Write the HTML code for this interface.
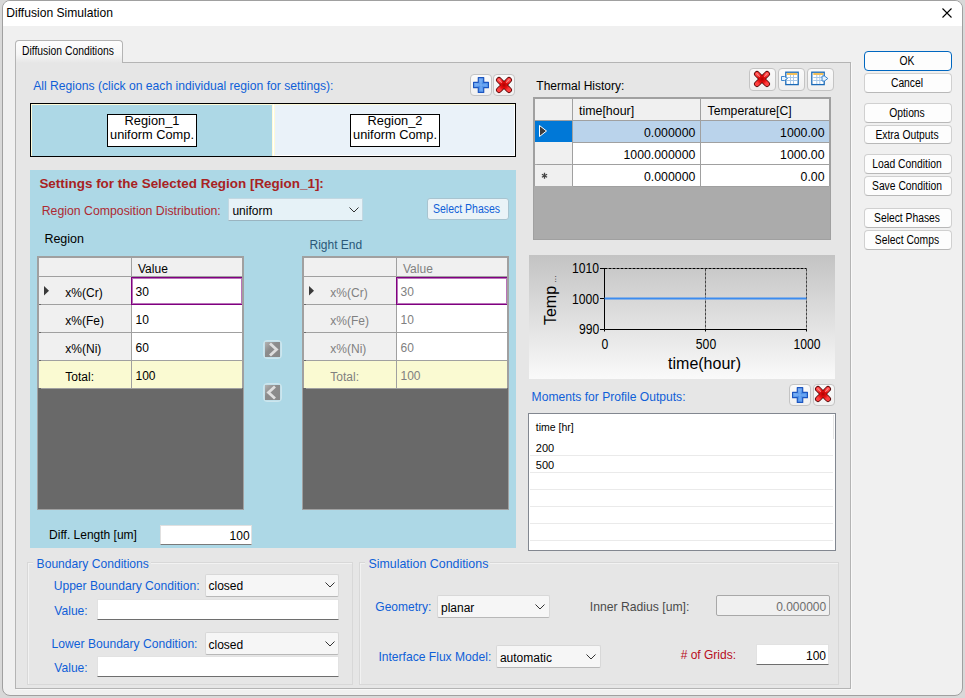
<!DOCTYPE html><html><head><meta charset="utf-8"><style>html,body{margin:0;padding:0;}body{width:965px;height:698px;position:relative;overflow:hidden;background:#d8d8d8;font-family:"Liberation Sans", sans-serif;}</style></head><body>
<div style="position:absolute;left:2px;top:0px;width:961px;height:696px;box-sizing:border-box;background:#f0f0f0;border:1px solid #a0a0a0;border-radius:8px;"></div>
<div style="position:absolute;left:3px;top:1px;width:959px;height:25px;box-sizing:border-box;background:#fff;border-radius:7px 7px 0 0;"></div>
<div style="position:absolute;left:6.3px;top:6.76px;font-size:12.1px;line-height:12.1px;color:#000;white-space:nowrap;">Diffusion Simulation</div>
<svg style="position:absolute;left:941px;top:7px" width="12" height="12"><path d="M1.5 1.5L10.5 10.5M10.5 1.5L1.5 10.5" stroke="#000" stroke-width="1.1"/></svg>
<div style="position:absolute;left:15px;top:62px;width:836px;height:627px;box-sizing:border-box;background:#e6e6e6;border:1px solid #b4b4b4;border-right-color:#b4b4b4;box-shadow:1px 1px 0 #f8f8f8;"></div>
<div style="position:absolute;left:15px;top:40px;width:108px;height:23px;box-sizing:border-box;background:linear-gradient(#fdfdfd 0%,#f6f6f6 60%,#e6e6e6 100%);border:1px solid #b4b4b4;border-bottom:none;border-radius:4px 4px 0 0;"></div>
<div style="position:absolute;left:22.4px;top:44.84px;font-size:12px;line-height:12px;color:#000;white-space:nowrap;transform:scaleX(0.862);transform-origin:left;">Diffusion Conditions</div>
<div style="position:absolute;left:33.2px;top:79.72px;font-size:12.15px;line-height:12.15px;color:#0f5fd8;white-space:nowrap;">All Regions (click on each individual region for settings):</div>
<div style="position:absolute;left:470px;top:74px;width:22px;height:22px;box-sizing:border-box;background:linear-gradient(#fafafa,#f0f0f0);border:1px solid #c4c4c4;border-radius:4px;"><svg width="22" height="22" style="position:absolute;left:-1px;top:-1px"><defs><linearGradient id="gp470" x1="0" y1="0" x2="1" y2="1"><stop offset="0" stop-color="#a8d0ff"/><stop offset="0.5" stop-color="#4a8ee8"/><stop offset="1" stop-color="#7ab4fa"/></linearGradient></defs><g transform="translate(3,3)"><path d="M5.3 0.6h5.4v4.7h4.7v5.4h-4.7v4.7h-5.4v-4.7h-4.7v-5.4h4.7z" fill="url(#gp470)" stroke="#1c55c0" stroke-width="1.2" stroke-linejoin="round"/><path d="M8 2.5v11M2.5 8h11" stroke="#9cc8ff" stroke-width="1" opacity="0.6"/></g></svg></div>
<div style="position:absolute;left:493px;top:74px;width:22px;height:22px;box-sizing:border-box;background:linear-gradient(#fafafa,#f0f0f0);border:1px solid #c4c4c4;border-radius:4px;"><svg width="22" height="22" style="position:absolute;left:-1px;top:-1px"><defs><radialGradient id="gx493" cx="0.5" cy="0.5" r="0.6"><stop offset="0" stop-color="#b00000"/><stop offset="0.6" stop-color="#e81010"/><stop offset="1" stop-color="#ff4040"/></radialGradient></defs><g transform="translate(3,3)"><path d="M3 3L13 13M13 3L3 13" stroke="#5a0a0a" stroke-width="6" stroke-linecap="round"/><path d="M3 3L13 13M13 3L3 13" stroke="url(#gx493)" stroke-width="4.3" stroke-linecap="round"/><path d="M2.8 2.6L5.5 5.3M13.2 2.6L10.5 5.3" stroke="#ffb0b0" stroke-width="1.2" stroke-linecap="round" opacity="0.7"/></g></svg></div>
<div style="position:absolute;left:30px;top:103px;width:486px;height:54px;box-sizing:border-box;background:#eaf2f9;border:1px solid #000;"></div>
<div style="position:absolute;left:31px;top:104px;width:242px;height:52px;box-sizing:border-box;background:#add8e6;border-left:1px solid #fffbd8;border-top:1px solid #fffbd8;border-right:1px solid #fffbd8;"></div>
<div style="position:absolute;left:273px;top:104px;width:1px;height:52px;box-sizing:border-box;background:#fff;"></div>
<div style="position:absolute;left:274px;top:104px;width:241px;height:52px;box-sizing:border-box;background:#eaf2f9;border-left:1px solid #fffbd8;border-top:1px solid #fffbd8;border-right:1px solid #fff;border-bottom:1px solid #fff;"></div>
<div style="position:absolute;left:107px;top:114px;width:90px;height:33px;box-sizing:border-box;background:#fff;border:1px solid #000;"></div>
<div style="position:absolute;left:-48px;width:400px;text-align:center;top:115.16px;font-size:12.8px;line-height:12.8px;color:#000;white-space:nowrap;">Region_1</div>
<div style="position:absolute;left:-48px;width:400px;text-align:center;top:129.16px;font-size:12.8px;line-height:12.8px;color:#000;white-space:nowrap;">uniform Comp.</div>
<div style="position:absolute;left:350px;top:114px;width:90px;height:33px;box-sizing:border-box;background:#fff;border:1px solid #000;"></div>
<div style="position:absolute;left:195px;width:400px;text-align:center;top:115.16px;font-size:12.8px;line-height:12.8px;color:#000;white-space:nowrap;">Region_2</div>
<div style="position:absolute;left:195px;width:400px;text-align:center;top:129.16px;font-size:12.8px;line-height:12.8px;color:#000;white-space:nowrap;">uniform Comp.</div>
<div style="position:absolute;left:30px;top:170px;width:486px;height:378px;box-sizing:border-box;background:#add8e6;"></div>
<div style="position:absolute;left:39.4px;top:177.11px;font-size:13.45px;line-height:13.45px;color:#a82222;white-space:nowrap;font-weight:bold;">Settings for the Selected Region [Region_1]:</div>
<div style="position:absolute;left:41.7px;top:204.59px;font-size:12.3px;line-height:12.3px;color:#ad2a32;white-space:nowrap;">Region Composition Distribution:</div>
<div style="position:absolute;left:228px;top:198px;width:135px;height:23px;box-sizing:border-box;background:#e6f2f7;border:1px solid #c2d8e2;border-bottom-color:#9ab4c0;"></div>
<div style="position:absolute;left:232.4px;top:204.84px;font-size:12px;line-height:12px;color:#000;white-space:nowrap;">uniform</div>
<svg style="position:absolute;left:349px;top:207px" width="10" height="6"><path d="M0.5 0.5L5 5L9.5 0.5" stroke="#333" stroke-width="1" fill="none"/></svg>
<div style="position:absolute;left:427px;top:198px;width:82px;height:22px;box-sizing:border-box;background:#eaf3f7;border:1px solid #a8c4d0;border-radius:3px;"></div>
<div style="position:absolute;left:433.4px;top:202.84px;font-size:12px;line-height:12px;color:#0f5fd8;white-space:nowrap;transform:scaleX(0.875);transform-origin:left;">Select Phases</div>
<div style="position:absolute;left:44.4px;top:232.62px;font-size:12.5px;line-height:12.5px;color:#000;white-space:nowrap;">Region</div>
<div style="position:absolute;left:309.5px;top:238.84px;font-size:12px;line-height:12px;color:#2a5878;white-space:nowrap;">Right End</div>
<div style="position:absolute;left:263px;top:340px;width:19px;height:20px;box-sizing:border-box;"><svg width="19" height="19" style="position:absolute;left:0;top:0"><defs><linearGradient id="ga340" x1="0" y1="0" x2="1" y2="1"><stop offset="0" stop-color="#b4b4b4"/><stop offset="0.4" stop-color="#8c8c8c"/><stop offset="1" stop-color="#888"/></linearGradient></defs><rect x="0.5" y="0.5" width="18" height="18" rx="3.5" fill="#c2e0ea" stroke="#cde6ee"/><rect x="2" y="2" width="15" height="15" fill="url(#ga340)"/><path d="M7 3.5L13.5 9.5L7 15.5" stroke="#dedede" stroke-width="2.8" fill="none"/></svg></div>
<div style="position:absolute;left:263px;top:383px;width:19px;height:19px;box-sizing:border-box;"><svg width="19" height="19" style="position:absolute;left:0;top:0"><defs><linearGradient id="ga383" x1="0" y1="0" x2="1" y2="1"><stop offset="0" stop-color="#b4b4b4"/><stop offset="0.4" stop-color="#8c8c8c"/><stop offset="1" stop-color="#888"/></linearGradient></defs><rect x="0.5" y="0.5" width="18" height="18" rx="3.5" fill="#c2e0ea" stroke="#cde6ee"/><rect x="2" y="2" width="15" height="15" fill="url(#ga383)"/><path d="M12 3.5L5.5 9.5L12 15.5" stroke="#dedede" stroke-width="2.8" fill="none"/></svg></div>
<div style="position:absolute;left:160px;top:525px;width:92px;height:20px;box-sizing:border-box;background:#fff;border:1px solid #e0e0e0;border-bottom:1px solid #7a7a7a;"></div>
<div style="position:absolute;left:49.1px;top:528.84px;font-size:12px;line-height:12px;color:#000;white-space:nowrap;">Diff. Length [um]</div>
<div style="position:absolute;right:715.4px;top:529.84px;font-size:12px;line-height:12px;color:#000;white-space:nowrap;">100</div>
<div style="position:absolute;left:37px;top:256px;width:207px;height:254px;box-sizing:border-box;background:#696969;border:1px solid #a0a0a0;"></div>
<div style="position:absolute;left:39px;top:258px;width:203px;height:18px;box-sizing:border-box;background:#f0f0f0;"></div>
<div style="position:absolute;left:39px;top:276px;width:203px;height:1px;box-sizing:border-box;background:#a0a0a0;"></div>
<div style="position:absolute;left:131px;top:258px;width:1px;height:130px;box-sizing:border-box;background:#a0a0a0;"></div>
<div style="position:absolute;left:138px;top:263.24px;font-size:12px;line-height:12px;color:#000;white-space:nowrap;">Value</div>
<div style="position:absolute;left:39px;top:277px;width:92px;height:27px;box-sizing:border-box;background:#f0f0f0;"></div>
<div style="position:absolute;left:132px;top:277px;width:110px;height:27px;box-sizing:border-box;background:#fff;"></div>
<div style="position:absolute;left:41px;top:304px;width:90px;height:1px;box-sizing:border-box;background:#a0a0a0;"></div>
<div style="position:absolute;left:39px;top:305px;width:92px;height:1px;box-sizing:border-box;background:#fff;"></div>
<div style="position:absolute;left:131px;top:304px;width:111px;height:1px;box-sizing:border-box;background:#a0a0a0;"></div>
<div style="position:absolute;left:65.3px;top:286.84px;font-size:12px;line-height:12px;color:#000;white-space:nowrap;">x%(Cr)</div>
<div style="position:absolute;left:135.5px;top:286.34px;font-size:12px;line-height:12px;color:#000;white-space:nowrap;">30</div>
<div style="position:absolute;left:39px;top:305px;width:92px;height:27px;box-sizing:border-box;background:#f0f0f0;"></div>
<div style="position:absolute;left:132px;top:305px;width:110px;height:27px;box-sizing:border-box;background:#fff;"></div>
<div style="position:absolute;left:41px;top:332px;width:90px;height:1px;box-sizing:border-box;background:#a0a0a0;"></div>
<div style="position:absolute;left:39px;top:333px;width:92px;height:1px;box-sizing:border-box;background:#fff;"></div>
<div style="position:absolute;left:131px;top:332px;width:111px;height:1px;box-sizing:border-box;background:#a0a0a0;"></div>
<div style="position:absolute;left:65.3px;top:314.84px;font-size:12px;line-height:12px;color:#000;white-space:nowrap;">x%(Fe)</div>
<div style="position:absolute;left:135.5px;top:314.34px;font-size:12px;line-height:12px;color:#000;white-space:nowrap;">10</div>
<div style="position:absolute;left:39px;top:333px;width:92px;height:27px;box-sizing:border-box;background:#f0f0f0;"></div>
<div style="position:absolute;left:132px;top:333px;width:110px;height:27px;box-sizing:border-box;background:#fff;"></div>
<div style="position:absolute;left:41px;top:360px;width:90px;height:1px;box-sizing:border-box;background:#a0a0a0;"></div>
<div style="position:absolute;left:39px;top:361px;width:92px;height:1px;box-sizing:border-box;background:#fff;"></div>
<div style="position:absolute;left:131px;top:360px;width:111px;height:1px;box-sizing:border-box;background:#a0a0a0;"></div>
<div style="position:absolute;left:65.3px;top:342.84px;font-size:12px;line-height:12px;color:#000;white-space:nowrap;">x%(Ni)</div>
<div style="position:absolute;left:135.5px;top:342.34px;font-size:12px;line-height:12px;color:#000;white-space:nowrap;">60</div>
<div style="position:absolute;left:39px;top:361px;width:92px;height:27px;box-sizing:border-box;background:#fafad2;"></div>
<div style="position:absolute;left:132px;top:361px;width:110px;height:27px;box-sizing:border-box;background:#fafad2;"></div>
<div style="position:absolute;left:41px;top:388px;width:90px;height:1px;box-sizing:border-box;background:#a0a0a0;"></div>
<div style="position:absolute;left:131px;top:388px;width:111px;height:1px;box-sizing:border-box;background:#a0a0a0;"></div>
<div style="position:absolute;left:65.3px;top:370.84px;font-size:12px;line-height:12px;color:#000;white-space:nowrap;">Total:</div>
<div style="position:absolute;left:135.5px;top:370.34px;font-size:12px;line-height:12px;color:#000;white-space:nowrap;">100</div>
<div style="position:absolute;left:131px;top:277px;width:112px;height:28px;box-sizing:border-box;border:1px solid #800080;box-shadow:inset 0 0 0 1px rgba(128,0,128,0.55);"></div>
<svg style="position:absolute;left:44px;top:286px" width="6" height="10"><path d="M0 0L5 4.7L0 9.4z" fill="#3a3a3a"/></svg>
<div style="position:absolute;left:38px;top:257px;width:205px;height:131px;box-sizing:border-box;border:1px solid #a0a0a0;border-bottom:none;"></div>
<div style="position:absolute;left:302px;top:256px;width:207px;height:254px;box-sizing:border-box;background:#696969;border:1px solid #a0a0a0;"></div>
<div style="position:absolute;left:304px;top:258px;width:203px;height:18px;box-sizing:border-box;background:#f0f0f0;"></div>
<div style="position:absolute;left:304px;top:276px;width:203px;height:1px;box-sizing:border-box;background:#a0a0a0;"></div>
<div style="position:absolute;left:396px;top:258px;width:1px;height:130px;box-sizing:border-box;background:#a0a0a0;"></div>
<div style="position:absolute;left:403px;top:263.24px;font-size:12px;line-height:12px;color:#808080;white-space:nowrap;">Value</div>
<div style="position:absolute;left:304px;top:277px;width:92px;height:27px;box-sizing:border-box;background:#f0f0f0;"></div>
<div style="position:absolute;left:397px;top:277px;width:110px;height:27px;box-sizing:border-box;background:#fff;"></div>
<div style="position:absolute;left:306px;top:304px;width:90px;height:1px;box-sizing:border-box;background:#a0a0a0;"></div>
<div style="position:absolute;left:304px;top:305px;width:92px;height:1px;box-sizing:border-box;background:#fff;"></div>
<div style="position:absolute;left:396px;top:304px;width:111px;height:1px;box-sizing:border-box;background:#a0a0a0;"></div>
<div style="position:absolute;left:330.3px;top:286.84px;font-size:12px;line-height:12px;color:#808080;white-space:nowrap;">x%(Cr)</div>
<div style="position:absolute;left:400.5px;top:286.34px;font-size:12px;line-height:12px;color:#808080;white-space:nowrap;">30</div>
<div style="position:absolute;left:304px;top:305px;width:92px;height:27px;box-sizing:border-box;background:#f0f0f0;"></div>
<div style="position:absolute;left:397px;top:305px;width:110px;height:27px;box-sizing:border-box;background:#fff;"></div>
<div style="position:absolute;left:306px;top:332px;width:90px;height:1px;box-sizing:border-box;background:#a0a0a0;"></div>
<div style="position:absolute;left:304px;top:333px;width:92px;height:1px;box-sizing:border-box;background:#fff;"></div>
<div style="position:absolute;left:396px;top:332px;width:111px;height:1px;box-sizing:border-box;background:#a0a0a0;"></div>
<div style="position:absolute;left:330.3px;top:314.84px;font-size:12px;line-height:12px;color:#808080;white-space:nowrap;">x%(Fe)</div>
<div style="position:absolute;left:400.5px;top:314.34px;font-size:12px;line-height:12px;color:#808080;white-space:nowrap;">10</div>
<div style="position:absolute;left:304px;top:333px;width:92px;height:27px;box-sizing:border-box;background:#f0f0f0;"></div>
<div style="position:absolute;left:397px;top:333px;width:110px;height:27px;box-sizing:border-box;background:#fff;"></div>
<div style="position:absolute;left:306px;top:360px;width:90px;height:1px;box-sizing:border-box;background:#a0a0a0;"></div>
<div style="position:absolute;left:304px;top:361px;width:92px;height:1px;box-sizing:border-box;background:#fff;"></div>
<div style="position:absolute;left:396px;top:360px;width:111px;height:1px;box-sizing:border-box;background:#a0a0a0;"></div>
<div style="position:absolute;left:330.3px;top:342.84px;font-size:12px;line-height:12px;color:#808080;white-space:nowrap;">x%(Ni)</div>
<div style="position:absolute;left:400.5px;top:342.34px;font-size:12px;line-height:12px;color:#808080;white-space:nowrap;">60</div>
<div style="position:absolute;left:304px;top:361px;width:92px;height:27px;box-sizing:border-box;background:#fafad2;"></div>
<div style="position:absolute;left:397px;top:361px;width:110px;height:27px;box-sizing:border-box;background:#fafad2;"></div>
<div style="position:absolute;left:306px;top:388px;width:90px;height:1px;box-sizing:border-box;background:#a0a0a0;"></div>
<div style="position:absolute;left:396px;top:388px;width:111px;height:1px;box-sizing:border-box;background:#a0a0a0;"></div>
<div style="position:absolute;left:330.3px;top:370.84px;font-size:12px;line-height:12px;color:#808080;white-space:nowrap;">Total:</div>
<div style="position:absolute;left:400.5px;top:370.34px;font-size:12px;line-height:12px;color:#808080;white-space:nowrap;">100</div>
<div style="position:absolute;left:396px;top:277px;width:112px;height:28px;box-sizing:border-box;border:1px solid #800080;box-shadow:inset 0 0 0 1px rgba(128,0,128,0.55);"></div>
<svg style="position:absolute;left:309px;top:286px" width="6" height="10"><path d="M0 0L5 4.7L0 9.4z" fill="#3a3a3a"/></svg>
<div style="position:absolute;left:303px;top:257px;width:205px;height:131px;box-sizing:border-box;border:1px solid #a0a0a0;border-bottom:none;"></div>
<div style="position:absolute;left:536.3px;top:80.34px;font-size:12px;line-height:12px;color:#000;white-space:nowrap;">Thermal History:</div>
<div style="position:absolute;left:749px;top:68px;width:27px;height:23px;box-sizing:border-box;background:linear-gradient(#fafafa,#f0f0f0);border:1px solid #c4c4c4;border-radius:4px;"><svg width="26.0" height="22.099999999999994" style="position:absolute;left:-1px;top:-1px"><defs><radialGradient id="gx750" cx="0.5" cy="0.5" r="0.6"><stop offset="0" stop-color="#b00000"/><stop offset="0.6" stop-color="#e81010"/><stop offset="1" stop-color="#ff4040"/></radialGradient></defs><g transform="translate(5,3)"><path d="M3 3L13 13M13 3L3 13" stroke="#5a0a0a" stroke-width="6" stroke-linecap="round"/><path d="M3 3L13 13M13 3L3 13" stroke="url(#gx750)" stroke-width="4.3" stroke-linecap="round"/><path d="M2.8 2.6L5.5 5.3M13.2 2.6L10.5 5.3" stroke="#ffb0b0" stroke-width="1.2" stroke-linecap="round" opacity="0.7"/></g></svg></div>
<div style="position:absolute;left:778px;top:68px;width:27px;height:23px;box-sizing:border-box;background:linear-gradient(#fafafa,#f0f0f0);border:1px solid #c4c4c4;border-radius:4px;"><svg width="26.0" height="22.099999999999994" style="position:absolute;left:-1px;top:-1px"><g transform="translate(0,0)"><rect x="7.8" y="4.2" width="12.4" height="12.4" fill="#fff" stroke="#1a6ab8" stroke-width="1.3"/><rect x="9" y="5.2" width="10" height="1.6" fill="#f0b030"/><path d="M9 9.5h10M9 12.5h10M12.5 7v9M15.5 7v9" stroke="#a8c8e8" stroke-width="1"/><path d="M3.5 8.5h3l3 2-3 2h-3z" fill="#e8f4ff" stroke="#2a7ac8" stroke-width="0.9"/></g></svg></div>
<div style="position:absolute;left:807px;top:68px;width:27px;height:23px;box-sizing:border-box;background:linear-gradient(#fafafa,#f0f0f0);border:1px solid #c4c4c4;border-radius:4px;"><svg width="26.0" height="22.099999999999994" style="position:absolute;left:-1px;top:-1px"><g><rect x="4.8" y="4.2" width="12.4" height="12.4" fill="#fff" stroke="#1a6ab8" stroke-width="1.3"/><rect x="6.3" y="5.2" width="10" height="1.6" fill="#f0b030"/><path d="M6.3 9.5h10M6.3 12.5h10M9.8 7v9M12.8 7v9" stroke="#a8c8e8" stroke-width="1"/><path d="M15 8h2.5l3.3 2.5-3.3 2.5h-2.5z" fill="#e8f4ff" stroke="#2a7ac8" stroke-width="0.9"/></g></svg></div>
<div style="position:absolute;left:533px;top:97px;width:298px;height:143px;box-sizing:border-box;background:#ababab;border:1px solid #a0a0a0;"></div>
<div style="position:absolute;left:534px;top:98px;width:296px;height:88px;box-sizing:border-box;border:1px solid #a0a0a0;border-bottom:none;"></div>
<div style="position:absolute;left:535px;top:99px;width:294px;height:21px;box-sizing:border-box;background:#f0f0f0;"></div>
<div style="position:absolute;left:535px;top:120px;width:294px;height:1px;box-sizing:border-box;background:#a0a0a0;"></div>
<div style="position:absolute;left:572px;top:99px;width:1px;height:87px;box-sizing:border-box;background:#a0a0a0;"></div>
<div style="position:absolute;left:700px;top:99px;width:1px;height:87px;box-sizing:border-box;background:#a0a0a0;"></div>
<div style="position:absolute;left:700px;top:104px;width:1px;height:13px;box-sizing:border-box;background:#a0a0a0;"></div>
<div style="position:absolute;left:579px;top:105.30px;font-size:12.4px;line-height:12.4px;color:#000;white-space:nowrap;">time[hour]</div>
<div style="position:absolute;left:707.6px;top:105.47px;font-size:12.2px;line-height:12.2px;color:#000;white-space:nowrap;">Temperature[C]</div>
<div style="position:absolute;left:535px;top:121px;width:37px;height:21px;box-sizing:border-box;background:#0078d7;"></div>
<div style="position:absolute;left:573px;top:121px;width:127px;height:21px;box-sizing:border-box;background:#bad3eb;"></div>
<div style="position:absolute;left:701px;top:121px;width:128px;height:21px;box-sizing:border-box;background:#bad3eb;"></div>
<div style="position:absolute;left:573px;top:142px;width:256px;height:1px;box-sizing:border-box;background:#a0a0a0;"></div>
<div style="position:absolute;right:269.70000000000005px;top:126.59px;font-size:12.3px;line-height:12.3px;color:#000;white-space:nowrap;">0.000000</div>
<div style="position:absolute;right:140.5px;top:126.59px;font-size:12.3px;line-height:12.3px;color:#000;white-space:nowrap;">1000.00</div>
<div style="position:absolute;left:535px;top:143px;width:37px;height:21px;box-sizing:border-box;background:#f0f0f0;"></div>
<div style="position:absolute;left:573px;top:143px;width:127px;height:21px;box-sizing:border-box;background:#fff;"></div>
<div style="position:absolute;left:701px;top:143px;width:128px;height:21px;box-sizing:border-box;background:#fff;"></div>
<div style="position:absolute;left:573px;top:164px;width:256px;height:1px;box-sizing:border-box;background:#a0a0a0;"></div>
<div style="position:absolute;right:269.70000000000005px;top:148.59px;font-size:12.3px;line-height:12.3px;color:#000;white-space:nowrap;">1000.000000</div>
<div style="position:absolute;right:140.5px;top:148.59px;font-size:12.3px;line-height:12.3px;color:#000;white-space:nowrap;">1000.00</div>
<div style="position:absolute;left:535px;top:165px;width:37px;height:21px;box-sizing:border-box;background:#f0f0f0;"></div>
<div style="position:absolute;left:573px;top:165px;width:127px;height:21px;box-sizing:border-box;background:#fff;"></div>
<div style="position:absolute;left:701px;top:165px;width:128px;height:21px;box-sizing:border-box;background:#fff;"></div>
<div style="position:absolute;left:573px;top:186px;width:256px;height:1px;box-sizing:border-box;background:#a0a0a0;"></div>
<div style="position:absolute;right:269.70000000000005px;top:170.59px;font-size:12.3px;line-height:12.3px;color:#000;white-space:nowrap;">0.000000</div>
<div style="position:absolute;right:140.5px;top:170.59px;font-size:12.3px;line-height:12.3px;color:#000;white-space:nowrap;">0.00</div>
<div style="position:absolute;left:537px;top:164px;width:34px;height:1px;box-sizing:border-box;background:#a0a0a0;"></div>
<div style="position:absolute;left:535px;top:142px;width:37px;height:1px;box-sizing:border-box;background:#f0f0f0;"></div>
<svg style="position:absolute;left:538px;top:124px" width="10" height="14"><path d="M1.5 1.5L8.5 7L1.5 12.5z" fill="#3c3c3c" stroke="#fff" stroke-width="1"/></svg>
<svg style="position:absolute;left:541px;top:172px" width="8" height="8"><path d="M3.5 0.8v6M0.9 2.3l5.2 3M0.9 5.3l5.2-3" stroke="#444" stroke-width="1.3"/></svg>
<div style="position:absolute;left:529px;top:255px;width:306px;height:124px;box-sizing:border-box;background:linear-gradient(#c3c3c3,#fafafa);"></div>
<svg style="position:absolute;left:529px;top:255px" width="306" height="124"><g stroke="#000" stroke-width="1" fill="none"><path d="M75.5 13.5h202" stroke-dasharray="3 1"/><path d="M277.5 13.5v60.5" stroke-dasharray="3 1" stroke="#444"/><path d="M176.5 13.5v60.5" stroke-dasharray="3 1" stroke="#444"/><path d="M75.5 13v61.5h202.5"/><path d="M71 13.5h4M71 43.5h4M71 74.5h4M75.5 74.5v2M176.5 74.5v2M277.5 74.5v2" stroke="#000"/></g><path d="M75.5 43.5h202" stroke="#3c8cf0" stroke-width="2"/></svg>
<div style="position:absolute;right:365.5px;top:261.15px;font-size:14px;line-height:14px;color:#000;white-space:nowrap;transform:scaleX(0.87);transform-origin:right;">1010</div>
<div style="position:absolute;right:365.5px;top:291.65px;font-size:14px;line-height:14px;color:#000;white-space:nowrap;transform:scaleX(0.87);transform-origin:right;">1000</div>
<div style="position:absolute;right:365.5px;top:322.15px;font-size:14px;line-height:14px;color:#000;white-space:nowrap;transform:scaleX(0.87);transform-origin:right;">990</div>
<div style="position:absolute;left:404.5px;width:400px;text-align:center;top:337.15px;font-size:14px;line-height:14px;color:#000;white-space:nowrap;transform:scaleX(0.87);transform-origin:center;">0</div>
<div style="position:absolute;left:505.5px;width:400px;text-align:center;top:337.15px;font-size:14px;line-height:14px;color:#000;white-space:nowrap;transform:scaleX(0.87);transform-origin:center;">500</div>
<div style="position:absolute;left:606.5px;width:400px;text-align:center;top:337.15px;font-size:14px;line-height:14px;color:#000;white-space:nowrap;transform:scaleX(0.87);transform-origin:center;">1000</div>
<div style="position:absolute;left:504.5px;width:400px;text-align:center;top:356.26px;font-size:16px;line-height:16px;color:#000;white-space:nowrap;">time(hour)</div>
<div style="position:absolute;left:521px;top:292px;width:60px;height:16px;font-size:16px;line-height:16px;transform:rotate(-90deg);text-align:center;white-space:nowrap;">Temp<span style="font-size:8px;margin-left:3px">&#8230;</span></div>
<div style="position:absolute;left:531.6px;top:390.76px;font-size:12.1px;line-height:12.1px;color:#0f5fd8;white-space:nowrap;">Moments for Profile Outputs:</div>
<div style="position:absolute;left:789px;top:384px;width:22px;height:22px;box-sizing:border-box;background:linear-gradient(#fafafa,#f0f0f0);border:1px solid #c4c4c4;border-radius:4px;"><svg width="21.0" height="21.19999999999999" style="position:absolute;left:-1px;top:-1px"><defs><linearGradient id="gp790" x1="0" y1="0" x2="1" y2="1"><stop offset="0" stop-color="#a8d0ff"/><stop offset="0.5" stop-color="#4a8ee8"/><stop offset="1" stop-color="#7ab4fa"/></linearGradient></defs><g transform="translate(3,3)"><path d="M5.3 0.6h5.4v4.7h4.7v5.4h-4.7v4.7h-5.4v-4.7h-4.7v-5.4h4.7z" fill="url(#gp790)" stroke="#1c55c0" stroke-width="1.2" stroke-linejoin="round"/><path d="M8 2.5v11M2.5 8h11" stroke="#9cc8ff" stroke-width="1" opacity="0.6"/></g></svg></div>
<div style="position:absolute;left:813px;top:384px;width:22px;height:22px;box-sizing:border-box;background:linear-gradient(#fafafa,#f0f0f0);border:1px solid #c4c4c4;border-radius:4px;"><svg width="21.200000000000045" height="21.19999999999999" style="position:absolute;left:-1px;top:-1px"><defs><radialGradient id="gx813" cx="0.5" cy="0.5" r="0.6"><stop offset="0" stop-color="#b00000"/><stop offset="0.6" stop-color="#e81010"/><stop offset="1" stop-color="#ff4040"/></radialGradient></defs><g transform="translate(2,2)"><path d="M3 3L13 13M13 3L3 13" stroke="#5a0a0a" stroke-width="6" stroke-linecap="round"/><path d="M3 3L13 13M13 3L3 13" stroke="url(#gx813)" stroke-width="4.3" stroke-linecap="round"/><path d="M2.8 2.6L5.5 5.3M13.2 2.6L10.5 5.3" stroke="#ffb0b0" stroke-width="1.2" stroke-linecap="round" opacity="0.7"/></g></svg></div>
<div style="position:absolute;left:528px;top:413px;width:308px;height:138px;box-sizing:border-box;background:#fff;border:1px solid #828790;"></div>
<div style="position:absolute;left:833px;top:415px;width:1px;height:24px;box-sizing:border-box;background:#e5e5e5;"></div>
<div style="position:absolute;left:535.8px;top:421.91px;font-size:10.5px;line-height:10.5px;color:#000;white-space:nowrap;">time [hr]</div>
<div style="position:absolute;left:535.8px;top:443.09px;font-size:11px;line-height:11px;color:#000;white-space:nowrap;">200</div>
<div style="position:absolute;left:535.8px;top:459.89px;font-size:11px;line-height:11px;color:#000;white-space:nowrap;">500</div>
<div style="position:absolute;left:530px;top:455px;width:303px;height:1px;box-sizing:border-box;background:#eaeaea;"></div>
<div style="position:absolute;left:530px;top:472px;width:303px;height:1px;box-sizing:border-box;background:#eaeaea;"></div>
<div style="position:absolute;left:530px;top:489px;width:303px;height:1px;box-sizing:border-box;background:#eaeaea;"></div>
<div style="position:absolute;left:530px;top:506px;width:303px;height:1px;box-sizing:border-box;background:#eaeaea;"></div>
<div style="position:absolute;left:530px;top:523px;width:303px;height:1px;box-sizing:border-box;background:#eaeaea;"></div>
<div style="position:absolute;left:530px;top:540px;width:303px;height:1px;box-sizing:border-box;background:#eaeaea;"></div>
<div style="position:absolute;left:864px;top:51px;width:88px;height:20px;box-sizing:border-box;background:#fdfdfd;border:1.5px solid #0067c0;border-bottom-color:#0067c0;border-radius:4px;"></div>
<div style="position:absolute;left:706.6px;width:400px;text-align:center;top:54.84px;font-size:12px;line-height:12px;color:#000;white-space:nowrap;transform:scaleX(0.86);transform-origin:center;">OK</div>
<div style="position:absolute;left:864px;top:73px;width:88px;height:20px;box-sizing:border-box;background:#fdfdfd;border:1px solid #d0d0d0;border-bottom-color:#b8b8b8;border-radius:4px;"></div>
<div style="position:absolute;left:706.6px;width:400px;text-align:center;top:76.84px;font-size:12px;line-height:12px;color:#000;white-space:nowrap;transform:scaleX(0.86);transform-origin:center;">Cancel</div>
<div style="position:absolute;left:864px;top:103px;width:88px;height:20px;box-sizing:border-box;background:#fdfdfd;border:1px solid #d0d0d0;border-bottom-color:#b8b8b8;border-radius:4px;"></div>
<div style="position:absolute;left:706.6px;width:400px;text-align:center;top:106.84px;font-size:12px;line-height:12px;color:#000;white-space:nowrap;transform:scaleX(0.86);transform-origin:center;">Options</div>
<div style="position:absolute;left:864px;top:125px;width:88px;height:19px;box-sizing:border-box;background:#fdfdfd;border:1px solid #d0d0d0;border-bottom-color:#b8b8b8;border-radius:4px;"></div>
<div style="position:absolute;left:706.6px;width:400px;text-align:center;top:128.84px;font-size:12px;line-height:12px;color:#000;white-space:nowrap;transform:scaleX(0.86);transform-origin:center;">Extra Outputs</div>
<div style="position:absolute;left:864px;top:154px;width:88px;height:20px;box-sizing:border-box;background:#fdfdfd;border:1px solid #d0d0d0;border-bottom-color:#b8b8b8;border-radius:4px;"></div>
<div style="position:absolute;left:706.6px;width:400px;text-align:center;top:158.34px;font-size:12px;line-height:12px;color:#000;white-space:nowrap;transform:scaleX(0.86);transform-origin:center;">Load Condition</div>
<div style="position:absolute;left:864px;top:176px;width:88px;height:20px;box-sizing:border-box;background:#fdfdfd;border:1px solid #d0d0d0;border-bottom-color:#b8b8b8;border-radius:4px;"></div>
<div style="position:absolute;left:706.6px;width:400px;text-align:center;top:180.34px;font-size:12px;line-height:12px;color:#000;white-space:nowrap;transform:scaleX(0.86);transform-origin:center;">Save Condition</div>
<div style="position:absolute;left:864px;top:208px;width:88px;height:20px;box-sizing:border-box;background:#fdfdfd;border:1px solid #d0d0d0;border-bottom-color:#b8b8b8;border-radius:4px;"></div>
<div style="position:absolute;left:706.6px;width:400px;text-align:center;top:212.34px;font-size:12px;line-height:12px;color:#000;white-space:nowrap;transform:scaleX(0.86);transform-origin:center;">Select Phases</div>
<div style="position:absolute;left:864px;top:230px;width:88px;height:20px;box-sizing:border-box;background:#fdfdfd;border:1px solid #d0d0d0;border-bottom-color:#b8b8b8;border-radius:4px;"></div>
<div style="position:absolute;left:706.6px;width:400px;text-align:center;top:234.34px;font-size:12px;line-height:12px;color:#000;white-space:nowrap;transform:scaleX(0.86);transform-origin:center;">Select Comps</div>
<div style="position:absolute;left:27px;top:562px;width:326px;height:123px;box-sizing:border-box;border:1px solid #d8d8d8;box-shadow:inset 1px 1px 0 #f2f2f2;"></div>
<div style="position:absolute;left:33px;top:558px;width:118px;height:14px;box-sizing:border-box;background:#e6e6e6;"></div>
<div style="position:absolute;left:36.6px;top:557.76px;font-size:12.1px;line-height:12.1px;color:#0f5fd8;white-space:nowrap;">Boundary Conditions</div>
<div style="position:absolute;left:53.7px;top:579.76px;font-size:12.1px;line-height:12.1px;color:#0f5fd8;white-space:nowrap;">Upper Boundary Condition:</div>
<div style="position:absolute;left:205px;top:574px;width:134px;height:23px;box-sizing:border-box;background:#f6f6f6;border:1px solid #d8d8d8;border-bottom-color:#b8b8b8;border-radius:2px;"></div>
<div style="position:absolute;left:208.5px;top:579.84px;font-size:12px;line-height:12px;color:#000;white-space:nowrap;">closed</div>
<svg style="position:absolute;left:324.5px;top:582.2px" width="10" height="6"><path d="M0.5 0.5L5 5L9.5 0.5" stroke="#333" stroke-width="1" fill="none"/></svg>
<div style="position:absolute;left:54.3px;top:604.76px;font-size:12.1px;line-height:12.1px;color:#0f5fd8;white-space:nowrap;">Value:</div>
<div style="position:absolute;left:97px;top:599px;width:242px;height:21px;box-sizing:border-box;background:#fff;border:1px solid #e2e2e2;border-bottom:1px solid #6e6e6e;"></div>
<div style="position:absolute;left:51.6px;top:638.06px;font-size:12.1px;line-height:12.1px;color:#0f5fd8;white-space:nowrap;">Lower Boundary Condition:</div>
<div style="position:absolute;left:205px;top:632px;width:134px;height:23px;box-sizing:border-box;background:#f6f6f6;border:1px solid #d8d8d8;border-bottom-color:#b8b8b8;border-radius:2px;"></div>
<div style="position:absolute;left:208.5px;top:638.54px;font-size:12px;line-height:12px;color:#000;white-space:nowrap;">closed</div>
<svg style="position:absolute;left:324.5px;top:640.5px" width="10" height="6"><path d="M0.5 0.5L5 5L9.5 0.5" stroke="#333" stroke-width="1" fill="none"/></svg>
<div style="position:absolute;left:54.3px;top:661.56px;font-size:12.1px;line-height:12.1px;color:#0f5fd8;white-space:nowrap;">Value:</div>
<div style="position:absolute;left:97px;top:656px;width:242px;height:21px;box-sizing:border-box;background:#fff;border:1px solid #e2e2e2;border-bottom:1px solid #6e6e6e;"></div>
<div style="position:absolute;left:359px;top:562px;width:480px;height:123px;box-sizing:border-box;border:1px solid #d8d8d8;box-shadow:inset 1px 1px 0 #f2f2f2;"></div>
<div style="position:absolute;left:365px;top:558px;width:125px;height:14px;box-sizing:border-box;background:#e6e6e6;"></div>
<div style="position:absolute;left:368.5px;top:558.30px;font-size:12.4px;line-height:12.4px;color:#0f5fd8;white-space:nowrap;">Simulation Conditions</div>
<div style="position:absolute;left:375.3px;top:601.24px;font-size:12px;line-height:12px;color:#0f5fd8;white-space:nowrap;">Geometry:</div>
<div style="position:absolute;left:437px;top:595px;width:113px;height:23px;box-sizing:border-box;background:#f6f6f6;border:1px solid #d8d8d8;border-bottom-color:#b8b8b8;border-radius:2px;"></div>
<div style="position:absolute;left:441.0px;top:601.54px;font-size:12px;line-height:12px;color:#000;white-space:nowrap;">planar</div>
<svg style="position:absolute;left:535.2px;top:603.5px" width="10" height="6"><path d="M0.5 0.5L5 5L9.5 0.5" stroke="#333" stroke-width="1" fill="none"/></svg>
<div style="position:absolute;left:589.8px;top:601.47px;font-size:12.2px;line-height:12.2px;color:#4a4a4a;white-space:nowrap;">Inner Radius [um]:</div>
<div style="position:absolute;left:716px;top:595px;width:114px;height:21px;box-sizing:border-box;background:#f0f0f0;border:1px solid #a8a8a8;border-radius:2px;"></div>
<div style="position:absolute;right:138.79999999999995px;top:600.64px;font-size:12px;line-height:12px;color:#6d6d6d;white-space:nowrap;">0.000000</div>
<div style="position:absolute;left:378.4px;top:650.96px;font-size:12.1px;line-height:12.1px;color:#0f5fd8;white-space:nowrap;">Interface Flux Model:</div>
<div style="position:absolute;left:496px;top:645px;width:105px;height:23px;box-sizing:border-box;background:#f6f6f6;border:1px solid #d8d8d8;border-bottom-color:#b8b8b8;border-radius:2px;"></div>
<div style="position:absolute;left:499.9px;top:651.54px;font-size:12px;line-height:12px;color:#000;white-space:nowrap;">automatic</div>
<svg style="position:absolute;left:586.1px;top:653.5px" width="10" height="6"><path d="M0.5 0.5L5 5L9.5 0.5" stroke="#333" stroke-width="1" fill="none"/></svg>
<div style="position:absolute;left:680.7px;top:649.04px;font-size:12px;line-height:12px;color:#b80c1c;white-space:nowrap;"># of Grids:</div>
<div style="position:absolute;left:756px;top:644px;width:73px;height:21px;box-sizing:border-box;background:#fff;border:1px solid #e2e2e2;border-bottom:1px solid #6e6e6e;"></div>
<div style="position:absolute;right:139px;top:649.84px;font-size:12px;line-height:12px;color:#000;white-space:nowrap;">100</div>
</body></html>
